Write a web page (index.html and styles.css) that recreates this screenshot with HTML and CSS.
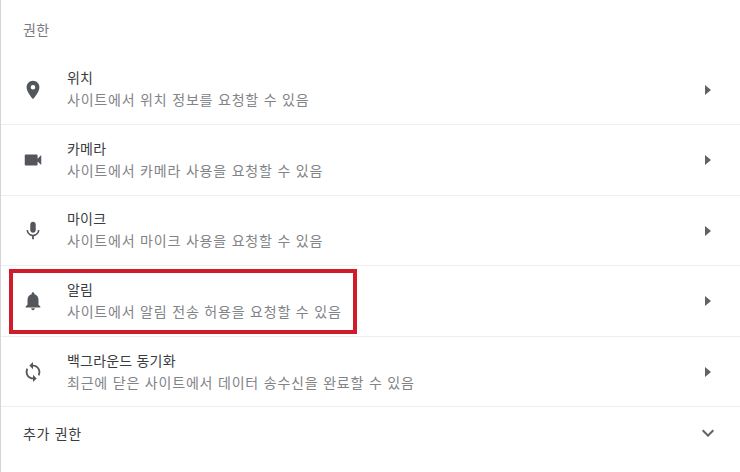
FILE: index.html
```html
<!DOCTYPE html>
<html lang="ko">
<head>
<meta charset="utf-8">
<title>권한</title>
<link rel="stylesheet" href="styles.css">
</head>
<body>
<main class="page">
  <h2 class="heading">권한</h2>
  <ul class="list">
    <li class="row">
      <svg class="icon" viewBox="0 0 24 24"><path d="M12 2C8.130 2 5 5.130 5 9c0 5.250 7 13 7 13s7-7.750 7-13c0-3.870-3.130-7-7-7zm0 9.500a2.500 2.500 0 1 1 0-5 2.500 2.500 0 0 1 0 5z"/></svg>
      <div class="text"><div class="title">위치</div><div class="sub">사이트에서 위치 정보를 요청할 수 있음</div></div>
      <svg class="arrow" viewBox="0 0 24 24"><path d="M9 7v10l6-5z"/></svg>
    </li>
    <li class="row">
      <svg class="icon" viewBox="0 0 24 24"><path d="M17 10.500V7a1 1 0 0 0-1-1H4a1 1 0 0 0-1 1v10a1 1 0 0 0 1 1h12a1 1 0 0 0 1-1v-3.500l4 4v-11z"/></svg>
      <div class="text"><div class="title">카메라</div><div class="sub">사이트에서 카메라 사용을 요청할 수 있음</div></div>
      <svg class="arrow" viewBox="0 0 24 24"><path d="M9 7v10l6-5z"/></svg>
    </li>
    <li class="row">
      <svg class="icon" viewBox="0 0 24 24"><path d="M12 14c1.660 0 3-1.340 3-3V5c0-1.660-1.340-3-3-3S9 3.340 9 5v6c0 1.660 1.340 3 3 3zm5.300-3c0 3-2.540 5.100-5.300 5.100S6.700 14 6.700 11H5c0 3.410 2.720 6.230 6 6.720V21h2v-3.280c3.280-.48 6-3.300 6-6.720h-1.700z"/></svg>
      <div class="text"><div class="title">마이크</div><div class="sub">사이트에서 마이크 사용을 요청할 수 있음</div></div>
      <svg class="arrow" viewBox="0 0 24 24"><path d="M9 7v10l6-5z"/></svg>
    </li>
    <li class="row">
      <svg class="icon" viewBox="0 0 24 24"><path d="M12 22c1.100 0 2-.9 2-2h-4c0 1.100.9 2 2 2zm6-6v-5c0-3.070-1.630-5.640-4.500-6.320V4c0-.83-.67-1.500-1.500-1.500s-1.500.67-1.500 1.500v.68C7.640 5.360 6 7.920 6 11v5l-2 2v1h16v-1l-2-2z"/></svg>
      <div class="text"><div class="title">알림</div><div class="sub">사이트에서 알림 전송 허용을 요청할 수 있음</div></div>
      <svg class="arrow" viewBox="0 0 24 24"><path d="M9 7v10l6-5z"/></svg>
      <div class="highlight"></div>
    </li>
    <li class="row">
      <svg class="icon" viewBox="0 0 24 24"><path d="M12 4V1L8 5l4 4V6c3.310 0 6 2.690 6 6 0 1.010-.25 1.970-.7 2.800l1.460 1.460A7.930 7.930 0 0 0 20 12c0-4.420-3.580-8-8-8zm0 14c-3.310 0-6-2.690-6-6 0-1.010.25-1.970.7-2.800L5.240 7.740A7.930 7.930 0 0 0 4 12c0 4.420 3.580 8 8 8v3l4-4-4-4v3z"/></svg>
      <div class="text"><div class="title">백그라운드 동기화</div><div class="sub">최근에 닫은 사이트에서 데이터 송수신을 완료할 수 있음</div></div>
      <svg class="arrow" viewBox="0 0 24 24"><path d="M9 7v10l6-5z"/></svg>
    </li>
    <li class="row more">
      <div class="more-label">추가 권한</div>
      <svg class="chevron" viewBox="0 0 24 24"><path d="M7.410 8.590 12 13.170l4.590-4.580L18 10l-6 6-6-6z"/></svg>
    </li>
  </ul>
</main>
</body>
</html>
```

FILE: styles.css
```css
* { box-sizing: border-box; }
html, body { margin: 0; padding: 0; }
body {
  width: 740px;
  height: 472px;
  overflow: hidden;
  background: #fff;
  font-family: "Noto Sans CJK KR", "Noto Sans", sans-serif;
}
.page {
  height: 472px;
  border-left: 1px solid #d4d4d4;
}
.heading {
  margin: 0;
  height: 54.4px;
  padding: 20px 0 0 22px;
  font-size: 14px;
  line-height: 18px;
  font-weight: 400;
  letter-spacing: 0.3px;
  color: #777a7e;
}
.list { margin: 0; padding: 0; list-style: none; }
.row {
  position: relative;
  display: flex;
  align-items: center;
  height: 70.6px;
  padding: 0 20px 0 21px;
  border-bottom: 1px solid #eeeeee;
}
.icon { width: 22px; height: 22px; fill: #53565b; flex: none; margin-top: 1px; }
.text { margin: -1px 0 0 23px; flex: 1; }
.title { font-size: 14px; line-height: 21px; letter-spacing: 0.2px; color: #3a3c3f; }
.sub { font-size: 14px; line-height: 22px; color: #808387; letter-spacing: 0.8px; }
.arrow { width: 24px; height: 24px; fill: #5f6368; flex: none; margin-top: 1px; }
.highlight {
  position: absolute;
  left: 8px;
  top: 3px;
  width: 348px;
  height: 65px;
  border: 4px solid #d01c2a;
}
.more { border-bottom: 0; height: 54px; padding-left: 22px; padding-right: 20px; align-items: flex-start; padding-top: 17px; }
.more-label { flex: 1; font-size: 14px; line-height: 18px; letter-spacing: 0.7px; color: #3a3c3f; }
.chevron { width: 24px; height: 24px; fill: #5f6368; flex: none; margin-top: -3px; }
```
